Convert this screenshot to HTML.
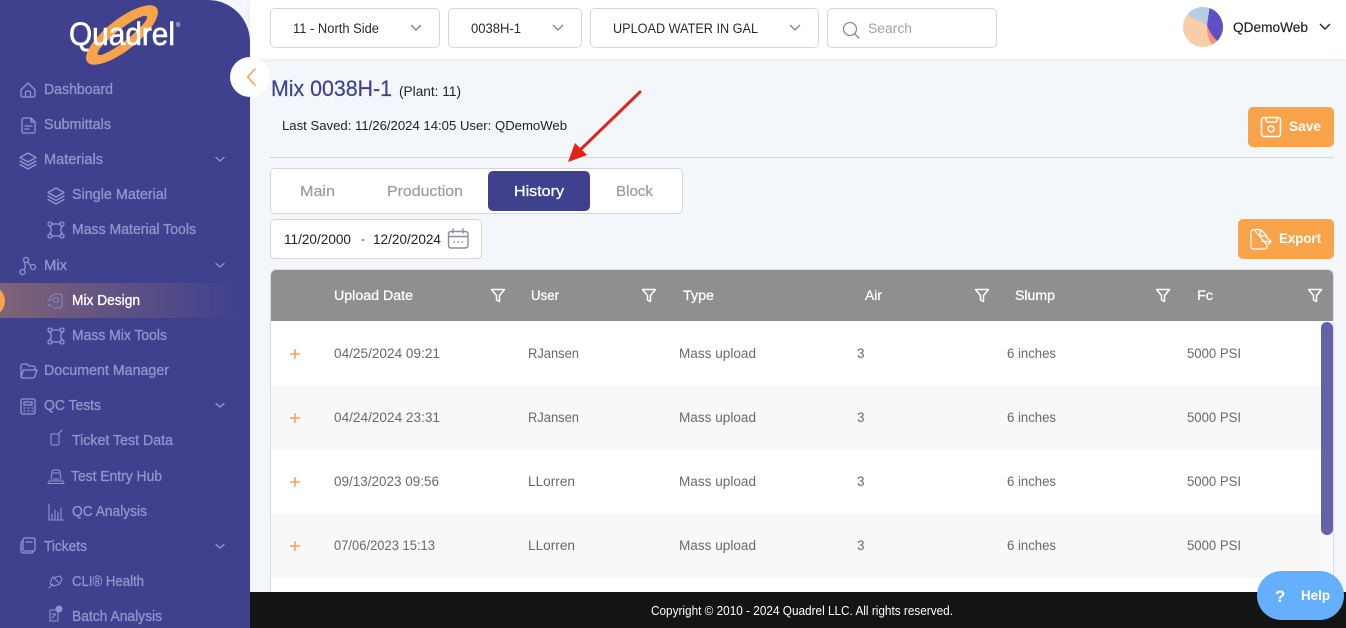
<!DOCTYPE html>
<html lang="en">
<head>
<meta charset="utf-8">
<title>Mix 0038H-1</title>
<style>
html,body{margin:0;padding:0;width:1346px;height:628px;overflow:hidden;background:#f3f6fa;font-family:"Liberation Sans",sans-serif}
.a{position:absolute;box-sizing:border-box}
.box{background:#fff;border:1px solid #d6d6d9;border-radius:5px}
.btn{background:#f9a34b;border-radius:5px}
svg{position:absolute;left:0;top:0}
text{font-family:"Liberation Sans",sans-serif;font-size:14px}
.s{fill:#9195cf;stroke:#9195cf;stroke-width:.3;font-size:14.5px}
.i{fill:none;stroke:#9195cf;stroke-width:1.3;stroke-linecap:round;stroke-linejoin:round}
.d{fill:#2a2a2a;font-size:13.5px}
.h{fill:#fff;stroke:#fff;stroke-width:.25;font-size:13.5px}
.r{fill:#6a6a6a;font-size:13.5px}
.t{fill:#9a9ba8;stroke:#9a9ba8;stroke-width:.2;font-size:15px}
.f{fill:none;stroke:#fff;stroke-width:1.5;stroke-linejoin:round}
.c{fill:none;stroke:#8b8d9e;stroke-width:1.4;stroke-linecap:round;stroke-linejoin:round}
</style>
</head>
<body>
<div class="a" style="left:250px;top:0;width:1096px;height:59px;background:#fff;box-shadow:0 1px 5px rgba(0,0,0,.05)"></div>
<div class="a box" style="left:270px;top:8px;width:170px;height:40px"></div>
<div class="a box" style="left:448px;top:8px;width:134px;height:40px"></div>
<div class="a box" style="left:590px;top:8px;width:229px;height:40px"></div>
<div class="a box" style="left:827px;top:8px;width:170px;height:40px"></div>
<div class="a btn" style="left:1248px;top:107px;width:86px;height:40px"></div>
<div class="a" style="left:270px;top:157px;width:1064px;height:1px;background:#d5d8dc"></div>
<div class="a box" style="left:270px;top:168px;width:413px;height:46px"></div>
<div class="a" style="left:488px;top:171px;width:102px;height:40px;background:#3f418f;border-radius:5px"></div>
<div class="a box" style="left:270px;top:219px;width:212px;height:40px"></div>
<div class="a btn" style="left:1238px;top:219px;width:96px;height:40px"></div>
<div class="a" style="left:270px;top:269px;width:1064px;height:340px;background:#fff;border:1px solid #dcdcdc;border-radius:6px 6px 0 0;overflow:hidden">
  <div class="a" style="left:0;top:0;width:1062px;height:51px;background:#8f8f8f"></div>
  <div class="a" style="left:0;top:116px;width:1050px;height:64px;background:#f8f8f8"></div>
  <div class="a" style="left:0;top:244px;width:1050px;height:64px;background:#f8f8f8"></div>
  <div class="a" style="left:1050px;top:51px;width:12px;height:289px;background:#fafafa"></div>
  <div class="a" style="left:1050px;top:52px;width:12px;height:213px;background:#6264a7;border-radius:6px"></div>
</div>
<div class="a" style="left:250px;top:592px;width:1096px;height:36px;background:#141414"></div>
<div class="a" style="left:0;top:0;width:250px;height:628px;background:#3f418f;border-top-right-radius:42px;overflow:hidden">
  <div class="a" style="left:0;top:283px;width:240px;height:35px;background:linear-gradient(90deg,rgba(249,163,75,.34),rgba(249,163,75,0))"></div>
  <div class="a" style="left:-25px;top:286px;width:30px;height:30px;border-radius:50%;background:#f9a34b"></div>
</div>
<div class="a" style="left:230px;top:57px;width:40px;height:40px;border-radius:50%;background:#fff"></div>
<div class="a" style="left:1257px;top:571px;width:87px;height:49px;background:#64b0ff;border-radius:25px"></div>

<svg width="1346" height="628" viewBox="0 0 1346 628">
<defs><clipPath id="av"><circle cx="1203" cy="27" r="20"/></clipPath></defs>

<!-- logo -->
<g transform="rotate(-38 122 35)">
  <path fill-rule="evenodd" fill="#f9a34b" d="M78 35A44 15.500 0 1 1 166 35A44 15.500 0 1 1 78 35ZM91 35.500A31 6 0 1 0 153 35.500A31 6 0 1 0 91 35.500Z"/>
</g>
<text x="69" y="45" textLength="106" lengthAdjust="spacingAndGlyphs" style="font-size:32px;fill:#fff;stroke:#fff;stroke-width:.6">Quadrel</text>
<text x="176" y="27" style="font-size:6px;fill:#fff">®</text>

<!-- collapse chevron -->
<path d="M255 69L247.500 77L255 85" fill="none" stroke="#f9a34b" stroke-width="1.600" stroke-linecap="round" stroke-linejoin="round"/>

<!-- sidebar labels -->
<text class="s" x="44" y="94" textLength="69" lengthAdjust="spacingAndGlyphs">Dashboard</text>
<text class="s" x="44" y="129" textLength="67" lengthAdjust="spacingAndGlyphs">Submittals</text>
<text class="s" x="44" y="164" textLength="59" lengthAdjust="spacingAndGlyphs">Materials</text>
<text class="s" x="72" y="199" textLength="95" lengthAdjust="spacingAndGlyphs">Single Material</text>
<text class="s" x="72" y="234" textLength="124" lengthAdjust="spacingAndGlyphs">Mass Material Tools</text>
<text class="s" x="44" y="270" textLength="23" lengthAdjust="spacingAndGlyphs">Mix</text>
<text x="72" y="305" textLength="68" lengthAdjust="spacingAndGlyphs" style="fill:#fff;stroke:#fff;stroke-width:.3;font-size:14.5px">Mix Design</text>
<text class="s" x="72" y="340" textLength="95" lengthAdjust="spacingAndGlyphs">Mass Mix Tools</text>
<text class="s" x="44" y="375" textLength="125" lengthAdjust="spacingAndGlyphs">Document Manager</text>
<text class="s" x="44" y="410" textLength="57" lengthAdjust="spacingAndGlyphs">QC Tests</text>
<text class="s" x="72" y="445" textLength="101" lengthAdjust="spacingAndGlyphs">Ticket Test Data</text>
<text class="s" x="71" y="481" textLength="91" lengthAdjust="spacingAndGlyphs">Test Entry Hub</text>
<text class="s" x="72" y="516" textLength="75" lengthAdjust="spacingAndGlyphs">QC Analysis</text>
<text class="s" x="44" y="551" textLength="43" lengthAdjust="spacingAndGlyphs">Tickets</text>
<text class="s" x="72" y="586" textLength="72" lengthAdjust="spacingAndGlyphs">CLI® Health</text>
<text class="s" x="72" y="621" textLength="90" lengthAdjust="spacingAndGlyphs">Batch Analysis</text>

<!-- sidebar icons -->
<path class="i" d="M21 90L28 83L35 90V95Q35 97 33 97H23Q21 97 21 95ZM25.500 97V93Q25.500 91 28 91Q30.500 91 30.500 93V97"/>
<path class="i" d="M24 118H31L35 122V131Q35 133 33 133H24Q22 133 22 131V120Q22 118 24 118ZM31 118V122H35M25 126H32M25 129H29"/>
<path class="i" d="M28 153L36 157.500L28 162L20 157.500ZM20 161L28 165.500L36 161M20 164.500L28 169L36 164.500"/>
<path class="i" d="M56 188L64 192.500L56 197L48 192.500ZM48 196L56 200.500L64 196M48 199.500L56 204L64 199.500"/>
<g id="net"><path class="i" d="M51.500 224H60.500M51.500 236H60.500M49.500 226Q53 230 49.500 234M62.500 226Q59 230 62.500 234"/><circle class="i" cx="50" cy="224" r="2"/><circle class="i" cx="62" cy="224" r="2"/><circle class="i" cx="50" cy="236" r="2"/><circle class="i" cx="62" cy="236" r="2"/></g>
<use href="#net" y="106"/>
<circle class="i" cx="26" cy="260" r="2.500"/><circle class="i" cx="33" cy="267" r="2.500"/><circle class="i" cx="22.500" cy="272" r="2.500"/>
<path class="i" d="M27.500 262L30.500 265.500M25 263V268L24 270"/>
<path class="i" d="M50 298Q52 294 57 294H60Q62 294 62 296V304Q62 308 59 308H54M48 300H52M48 304Q49 306 52 306" style="stroke-width:1;opacity:.8"/><circle class="i" cx="56" cy="300" r="2.500" style="stroke-width:1;opacity:.8"/>
<path class="i" d="M21 377V366Q21 364 23 364H27L29 366H33Q35 366 35 368V370M21 377L23.500 370H37L35 376Q34.500 378 33 378H23Q21 378 21 376"/>
<path class="i" d="M23 399H33Q35 399 35 401V412Q35 414 33 414H23Q21 414 21 412V401Q21 399 23 399ZM24 402H32V405H24ZM24 408H25M28 408H29M32 408H33M24 411H25M28 411H29M32 411H33"/>
<path class="i" d="M51 434H59V443Q59 445 57 445H53Q51 445 51 443ZM58 434L62 430" style="stroke-width:1.100"/>
<path class="i" d="M51 479L52 472Q52 470 54 470H58Q60 470 60 472L61 479M53 473H59M48 483.500Q48 481 50 481H62Q64 481 64 483.500ZM53 479H59" style="stroke-width:1"/>
<path class="i" d="M49 504V520H64M52 519V514M55 519V510M58 519V512M61 519V508" style="stroke-width:1.100"/>
<path class="i" d="M25 538H33Q35 538 35 540V549Q35 551 33 551H25Q23 551 23 549V540Q23 538 25 538ZM26 542H32M23 541Q21 541 21 544V551Q21 553 24 553H31Q33 553 33 551"/>
<path class="i" d="M50 584L52 578L60 576L62 579L60 584L54 586ZM49 588L53 584M53 577L59 583" style="stroke-width:1"/>
<path class="i" d="M50 610H58V621H50ZM52 618L56 614M52 614H55" style="stroke-width:1"/><circle cx="59" cy="609" r="3.500" fill="#9195cf"/>

<!-- sidebar chevrons -->
<path id="chv" d="M216 157.500L220 161L224 157.500" fill="none" stroke="#9195cf" stroke-width="1.400" stroke-linecap="round" stroke-linejoin="round"/>
<use href="#chv" y="106"/><use href="#chv" y="246"/><use href="#chv" y="387"/>

<!-- topbar -->
<text class="d" x="293" y="33" textLength="86" lengthAdjust="spacingAndGlyphs">11 - North Side</text>
<path d="M411 25L416 30L421 25" fill="none" stroke="#7d8290" stroke-width="1.300"/>
<text class="d" x="471" y="33" textLength="50" lengthAdjust="spacingAndGlyphs">0038H-1</text>
<path d="M553 25L558 30L563 25" fill="none" stroke="#7d8290" stroke-width="1.300"/>
<text class="d" x="613" y="33" textLength="145" lengthAdjust="spacingAndGlyphs">UPLOAD WATER IN GAL</text>
<path d="M790 25L795 30L800 25" fill="none" stroke="#7d8290" stroke-width="1.300"/>
<circle cx="850" cy="29" r="6.500" fill="none" stroke="#8b8b8b" stroke-width="1.300"/>
<path d="M855 34L859 38" stroke="#8b8b8b" stroke-width="1.300" stroke-linecap="round"/>
<text x="868" y="33" textLength="44" lengthAdjust="spacingAndGlyphs" style="fill:#a2a2a2;font-size:13.5px">Search</text>

<g clip-path="url(#av)">
  <rect x="1183" y="7" width="40" height="40" fill="#f6cfa8"/>
  <path d="M1183 12.500L1207 25L1210 5L1183 3Z" fill="#b5cde3"/>
  <path d="M1210 5L1207 25Q1209 33 1217 41L1226 38V5Z" fill="#5d4fc4"/>
  <path d="M1207 25Q1209 33 1217 41L1212 45Q1206 35 1207 25Z" fill="#f9907a"/>
</g>
<text x="1233" y="32" textLength="75" lengthAdjust="spacingAndGlyphs" style="fill:#222;font-size:13.500px;stroke:#222;stroke-width:.15">QDemoWeb</text>
<path d="M1320 24L1325 29L1330 24" fill="none" stroke="#222" stroke-width="1.400"/>

<!-- heading -->
<text x="271" y="96" textLength="121" lengthAdjust="spacingAndGlyphs" style="fill:#3f418f;font-size:22px;stroke:#3f418f;stroke-width:.2">Mix 0038H-1</text>
<text x="399" y="96" textLength="62" lengthAdjust="spacingAndGlyphs" style="fill:#222;font-size:14px">(Plant: 11)</text>
<text x="282" y="130" textLength="285" lengthAdjust="spacingAndGlyphs" style="fill:#222;font-size:13px">Last Saved: 11/26/2024 14:05 User: QDemoWeb</text>

<!-- save -->
<path d="M1264 117.500H1278Q1280.500 117.500 1280.500 120V133Q1280.500 136.500 1278 136.500H1264Q1261.500 136.500 1261.500 133V120Q1261.500 117.500 1264 117.500ZM1266 118V120Q1266 122 1268 122H1275Q1277 122 1277 120V118" fill="none" stroke="#fff" stroke-width="1.500"/>
<circle cx="1271" cy="129" r="3" fill="none" stroke="#fff" stroke-width="1.500"/>
<text x="1289" y="131" textLength="32" lengthAdjust="spacingAndGlyphs" style="fill:#fff;font-size:13.500px;font-weight:bold">Save</text>

<!-- arrow -->
<path d="M640 92L578 152" stroke="#e2231a" stroke-width="3" stroke-linecap="round"/>
<path d="M568 162L575 143L587 155Z" fill="#e2231a"/>

<!-- tabs -->
<text class="t" x="300" y="196" textLength="35" lengthAdjust="spacingAndGlyphs">Main</text>
<text class="t" x="387" y="196" textLength="76" lengthAdjust="spacingAndGlyphs">Production</text>
<text x="514" y="196" textLength="50" lengthAdjust="spacingAndGlyphs" style="fill:#fff;stroke:#fff;stroke-width:.3;font-size:15px">History</text>
<text class="t" x="616" y="196" textLength="37" lengthAdjust="spacingAndGlyphs">Block</text>

<!-- dates -->
<text x="284" y="244" textLength="67" lengthAdjust="spacingAndGlyphs" style="fill:#222;font-size:13.500px">11/20/2000</text>
<text x="361" y="243" style="fill:#333;font-size:12px">-</text>
<text x="373" y="244" textLength="68" lengthAdjust="spacingAndGlyphs" style="fill:#222;font-size:13.500px">12/20/2024</text>
<path class="c" d="M451 231.500H465Q468 231.500 468 234.500V245Q468 248 465 248H451Q448.500 248 448.500 245V234.500Q448.500 231.500 451 231.500ZM448.500 236.500H468M453 229V233M463 229V233M454 242H454.500M458 242H458.500M462 242H462.500"/>

<!-- export -->
<path d="M1254 229.500H1259Q1260.500 229.500 1262 231L1266 235Q1267 236 1267 237.500V238.500M1267 245V246Q1267 249 1264 249H1254Q1251 249 1251 246V232.500Q1251 229.500 1254 229.500ZM1260 230V233.500Q1260 236 1263 236H1267M1262 241.500H1271M1268.500 239L1271 241.500L1268.500 244" fill="none" stroke="#fff" stroke-width="1.300" stroke-linecap="round" stroke-linejoin="round"/>
<text x="1279" y="243" textLength="42" lengthAdjust="spacingAndGlyphs" style="fill:#fff;font-size:13.500px;font-weight:bold">Export</text>

<!-- table head -->
<text class="h" x="334" y="300" textLength="79" lengthAdjust="spacingAndGlyphs">Upload Date</text>
<text class="h" x="531" y="300" textLength="28" lengthAdjust="spacingAndGlyphs">User</text>
<text class="h" x="683" y="300" textLength="31" lengthAdjust="spacingAndGlyphs">Type</text>
<text class="h" x="865" y="300" textLength="17" lengthAdjust="spacingAndGlyphs">Air</text>
<text class="h" x="1015" y="300" textLength="40" lengthAdjust="spacingAndGlyphs">Slump</text>
<text class="h" x="1197" y="300" textLength="16" lengthAdjust="spacingAndGlyphs">Fc</text>
<path id="fl" class="f" d="M491.500 289.500H504.500L499.500 295.500V301.500L496.500 300V295.500Z"/>
<use href="#fl" x="151"/><use href="#fl" x="484"/><use href="#fl" x="665"/><use href="#fl" x="817"/>

<!-- rows -->
<g>
<path d="M290 354H300M295 349V359" stroke="#f9a34b" stroke-width="1.500"/>
<text class="r" x="334" y="358" textLength="106" lengthAdjust="spacingAndGlyphs">04/25/2024 09:21</text>
<text class="r" x="528" y="358" textLength="51" lengthAdjust="spacingAndGlyphs">RJansen</text>
<text class="r" x="679" y="358" textLength="77" lengthAdjust="spacingAndGlyphs">Mass upload</text>
<text class="r" x="857" y="358">3</text>
<text class="r" x="1007" y="358" textLength="49" lengthAdjust="spacingAndGlyphs">6 inches</text>
<text class="r" x="1187" y="358" textLength="54" lengthAdjust="spacingAndGlyphs">5000 PSI</text>
</g>
<g>
<path d="M290 418H300M295 413V423" stroke="#f9a34b" stroke-width="1.500"/>
<text class="r" x="334" y="422" textLength="106" lengthAdjust="spacingAndGlyphs">04/24/2024 23:31</text>
<text class="r" x="528" y="422" textLength="51" lengthAdjust="spacingAndGlyphs">RJansen</text>
<text class="r" x="679" y="422" textLength="77" lengthAdjust="spacingAndGlyphs">Mass upload</text>
<text class="r" x="857" y="422">3</text>
<text class="r" x="1007" y="422" textLength="49" lengthAdjust="spacingAndGlyphs">6 inches</text>
<text class="r" x="1187" y="422" textLength="54" lengthAdjust="spacingAndGlyphs">5000 PSI</text>
</g>
<g>
<path d="M290 482H300M295 477V487" stroke="#f9a34b" stroke-width="1.500"/>
<text class="r" x="334" y="486" textLength="105" lengthAdjust="spacingAndGlyphs">09/13/2023 09:56</text>
<text class="r" x="528" y="486" textLength="47" lengthAdjust="spacingAndGlyphs">LLorren</text>
<text class="r" x="679" y="486" textLength="77" lengthAdjust="spacingAndGlyphs">Mass upload</text>
<text class="r" x="857" y="486">3</text>
<text class="r" x="1007" y="486" textLength="49" lengthAdjust="spacingAndGlyphs">6 inches</text>
<text class="r" x="1187" y="486" textLength="54" lengthAdjust="spacingAndGlyphs">5000 PSI</text>
</g>
<g>
<path d="M290 546H300M295 541V551" stroke="#f9a34b" stroke-width="1.500"/>
<text class="r" x="334" y="550" textLength="101" lengthAdjust="spacingAndGlyphs">07/06/2023 15:13</text>
<text class="r" x="528" y="550" textLength="47" lengthAdjust="spacingAndGlyphs">LLorren</text>
<text class="r" x="679" y="550" textLength="77" lengthAdjust="spacingAndGlyphs">Mass upload</text>
<text class="r" x="857" y="550">3</text>
<text class="r" x="1007" y="550" textLength="49" lengthAdjust="spacingAndGlyphs">6 inches</text>
<text class="r" x="1187" y="550" textLength="54" lengthAdjust="spacingAndGlyphs">5000 PSI</text>
</g>

<!-- footer -->
<text x="651" y="615" textLength="302" lengthAdjust="spacingAndGlyphs" style="fill:#fff;font-size:12.500px">Copyright © 2010 - 2024 Quadrel LLC. All rights reserved.</text>

<!-- help -->
<text x="1275" y="602" style="fill:#fff;font-size:17px;font-weight:bold">?</text>
<text x="1301" y="600" textLength="29" lengthAdjust="spacingAndGlyphs" style="fill:#fff;font-size:14px;font-weight:bold">Help</text>
</svg>
</body>
</html>
